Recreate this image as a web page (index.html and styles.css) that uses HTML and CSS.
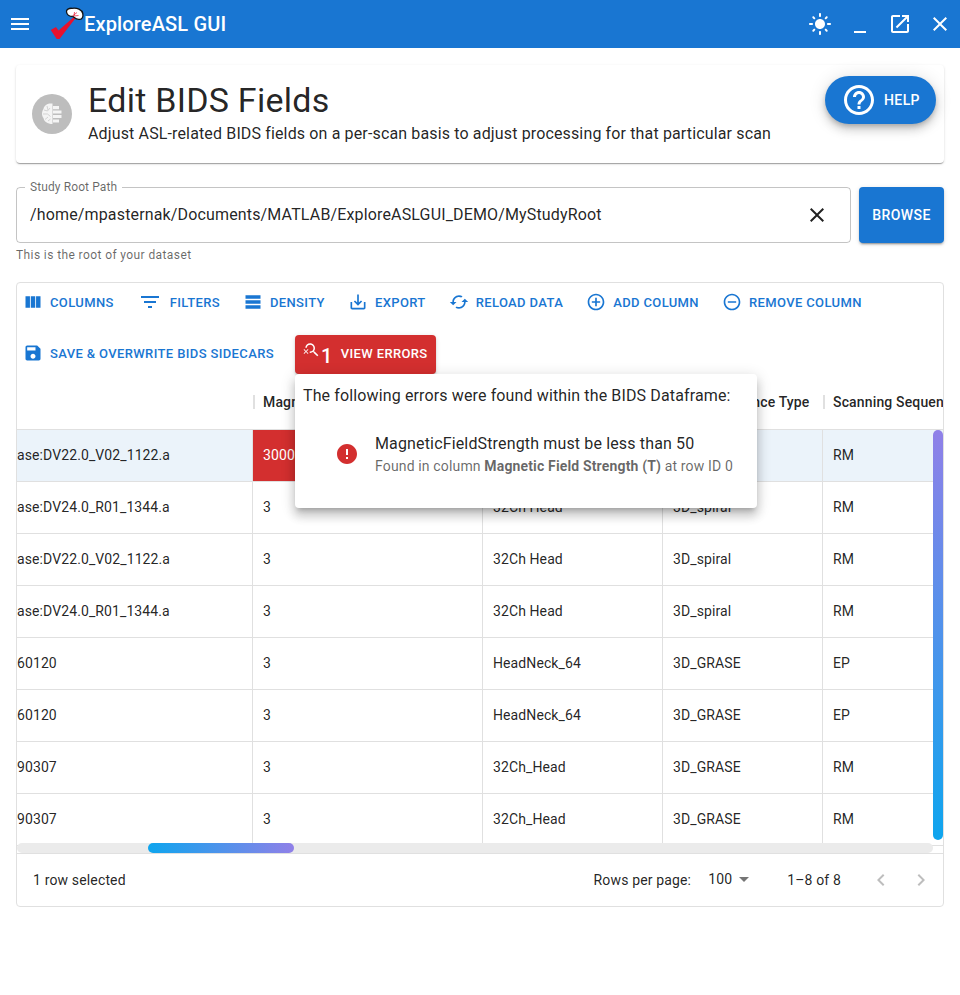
FILE: index.html
```html
<!DOCTYPE html>
<html>
<head>
    <meta charset="UTF-8">
    <meta name="viewport" content="width=device-width, initial-scale=1.0">
    <title>ExploreASL GUI</title>
    <link rel="stylesheet" href="styles.css">
</head>
<body>

<header class="appbar">
    <button class="icon-btn"><svg class="icon-24" viewBox="0 0 24 24"><path d="M3 18h18v-2H3v2zm0-5h18v-2H3v2zm0-7v2h18V6H3z"/></svg></button>
    <svg class="logo" viewBox="0 0 36 36">
        <path d="M.7 24 L6 21 L8.500 24.500 L25 10 L26 11.500 L9.500 33 L6.700 33z" fill="#e8112d"/>
        <path d="M16.500 6 C16 3.500 19 2 22 2.300 C27 1.500 32 3.500 32.800 7.500 C33.500 11 32 13.500 29.500 13.300 C27 14 25 12 23 10.500 C20 10.500 17 9 16.500 6z" fill="#fff" stroke="#111" stroke-width="1.300"/>
        <path d="M22.500 10 L27 6.500 M24 10 L28.500 9.500 M24 10 L24.500 6" stroke="#e8112d" stroke-width="0.700"/>
    </svg>
    <span class="app-title">ExploreASL GUI</span>
    <div class="appbar-right">
        <button class="icon-btn"><svg class="icon-24" viewBox="0 0 24 24"><path d="M12 7c-2.760 0-5 2.240-5 5s2.240 5 5 5 5-2.240 5-5-2.240-5-5-5zM2 13h2c.55 0 1-.45 1-1s-.45-1-1-1H2c-.55 0-1 .45-1 1s.45 1 1 1zm18 0h2c.55 0 1-.45 1-1s-.45-1-1-1h-2c-.55 0-1 .45-1 1s.45 1 1 1zM11 2v2c0 .55.45 1 1 1s1-.45 1-1V2c0-.55-.45-1-1-1s-1 .45-1 1zm0 18v2c0 .55.45 1 1 1s1-.45 1-1v-2c0-.55-.45-1-1-1s-1 .45-1 1zM5.990 4.580c-.39-.39-1.030-.39-1.410 0-.39.39-.39 1.030 0 1.410l1.060 1.060c.39.39 1.030.39 1.410 0s.39-1.030 0-1.410L5.990 4.580zm12.370 12.370c-.39-.39-1.030-.39-1.410 0-.39.39-.39 1.030 0 1.410l1.060 1.060c.39.39 1.030.39 1.410 0 .39-.39.39-1.030 0-1.410l-1.060-1.060zm1.060-10.960c.39-.39.39-1.030 0-1.410-.39-.39-1.030-.39-1.410 0l-1.060 1.060c-.39.39-.39 1.030 0 1.410s1.030.39 1.410 0l1.060-1.060zM7.050 18.360c.39-.39.39-1.030 0-1.410-.39-.39-1.030-.39-1.410 0l-1.060 1.060c-.39.39-.39 1.030 0 1.410s1.030.39 1.410 0l1.060-1.060z"/></svg></button>
        <button class="icon-btn"><svg class="icon-24" viewBox="0 0 24 24"><path d="M6 19h12v2H6z"/></svg></button>
        <button class="icon-btn"><svg class="icon-24" viewBox="0 0 24 24"><path d="M19 19H5V5h7V3H5c-1.110 0-2 .9-2 2v14c0 1.100.89 2 2 2h14c1.100 0 2-.9 2-2v-7h-2v7zM14 3v2h3.590l-9.830 9.830 1.410 1.410L19 6.410V10h2V3h-7z"/></svg></button>
        <button class="icon-btn"><svg class="icon-24" viewBox="0 0 24 24"><path d="M19 6.410 17.590 5 12 10.590 6.410 5 5 6.410 10.590 12 5 17.590 6.410 19 12 13.410 17.590 19 19 17.590 13.410 12z"/></svg></button>
    </div>
</header>

<main class="page">
    <section class="title-card">
        <div class="avatar">
            <svg viewBox="0 0 24 24" class="avatar-icon" fill="none">
                <path d="M12.500 1.500C8 1 4 3 3.500 7 1.500 9.500 1.500 14 3.500 16c.5 3.500 4 6 9 6z" fill="#f4f4f4"/>
                <path d="M4 8l3.500 1 2.500-3M3 12h4.500l3 2.500M5 17.500l3-2.500M7 4l1 4M8 19l2.500-2" stroke="#c4c4c4" stroke-width=".7"/>
                <path d="M13 4h6v3.200h-6zM13 8.600h8.500v3h-8.500zM13 13h8.500v3h-8.500zM13 17.400h6v3.200h-6z" fill="#f4f4f4"/>
            </svg>
        </div>
        <div class="title-text">
            <h1>Edit BIDS Fields</h1>
            <p>Adjust ASL-related BIDS fields on a per-scan basis to adjust processing for that particular scan</p>
        </div>
        <button class="help-btn">
            <svg class="help-icon" viewBox="0 0 24 24"><path d="M11 18h2v-2h-2v2zm1-16C6.480 2 2 6.480 2 12s4.480 10 10 10 10-4.480 10-10S17.520 2 12 2zm0 18c-4.410 0-8-3.590-8-8s3.590-8 8-8 8 3.590 8 8-3.590 8-8 8zm0-14c-2.210 0-4 1.790-4 4h2c0-1.100.9-2 2-2s2 .9 2 2c0 2-3 1.750-3 5h2c0-2.250 3-2.500 3-5 0-2.210-1.790-4-4-4z"/></svg>
            HELP
        </button>
    </section>

    <section class="path-row">
        <div class="path-field">
            <span class="path-label">Study Root Path</span>
            <span class="path-value">/home/mpasternak/Documents/MATLAB/ExploreASLGUI_DEMO/MyStudyRoot</span>
            <svg class="path-clear" viewBox="0 0 24 24"><path d="M19 6.410 17.590 5 12 10.590 6.410 5 5 6.410 10.590 12 5 17.590 6.410 19 12 13.410 17.590 19 19 17.590 13.410 12z"/></svg>
        </div>
        <button class="browse-btn">BROWSE</button>
    </section>
    <p class="helper">This is the root of your dataset</p>

    <section class="grid-panel">
        <div class="toolbar">
            <button class="tool-btn"><svg viewBox="0 0 24 24"><path d="M14.670 5v14H9.330V5h5.340zm1 14H21V5h-5.330v14zm-7.340 0V5H3v14h5.330z"/></svg>COLUMNS</button>
            <button class="tool-btn filters"><svg viewBox="0 0 24 24"><path d="M10 18h4v-2h-4v2zM3 6v2h18V6H3zm3 7h12v-2H6v2z"/></svg>FILTERS</button>
            <button class="tool-btn"><svg viewBox="0 0 24 24"><path d="M21 8H3V4h18v4zm0 2H3v4h18v-4zm0 6H3v4h18v-4z"/></svg>DENSITY</button>
            <button class="tool-btn"><svg viewBox="0 0 24 24"><path d="M19 12v7H5v-7H3v7c0 1.100.9 2 2 2h14c1.100 0 2-.9 2-2v-7h-2zm-6 .67l2.590-2.580L17 11.500l-5 5-5-5 1.410-1.410L11 12.670V3h2z"/></svg>EXPORT</button>
            <button class="tool-btn"><svg viewBox="0 0 24 24"><path d="M19 8l-4 4h3c0 3.310-2.690 6-6 6-1.010 0-1.970-.25-2.800-.7l-1.460 1.460C8.970 19.540 10.430 20 12 20c4.420 0 8-3.580 8-8h3l-4-4zM6 12c0-3.310 2.690-6 6-6 1.010 0 1.970.25 2.800.7l1.460-1.460C15.030 4.460 13.570 4 12 4c-4.420 0-8 3.580-8 8H1l4 4 4-4H6z"/></svg>RELOAD DATA</button>
            <button class="tool-btn"><svg viewBox="0 0 24 24"><path d="M13 7h-2v4H7v2h4v4h2v-4h4v-2h-4V7zm-1-5C6.480 2 2 6.480 2 12s4.480 10 10 10 10-4.480 10-10S17.520 2 12 2zm0 18c-4.410 0-8-3.590-8-8s3.590-8 8-8 8 3.590 8 8-3.590 8-8 8z"/></svg>ADD COLUMN</button>
            <button class="tool-btn"><svg viewBox="0 0 24 24"><path d="M7 11v2h10v-2H7zm5-9C6.480 2 2 6.480 2 12s4.480 10 10 10 10-4.480 10-10S17.520 2 12 2zm0 18c-4.410 0-8-3.590-8-8s3.590-8 8-8 8 3.590 8 8-3.590 8-8 8z"/></svg>REMOVE COLUMN</button>
            <button class="tool-btn save"><svg viewBox="0 0 24 24"><path d="M17 3H5c-1.110 0-2 .9-2 2v14c0 1.100.89 2 2 2h14c1.100 0 2-.9 2-2V7l-4-4zm-5 16c-1.660 0-3-1.340-3-3s1.340-3 3-3 3 1.340 3 3-1.340 3-3 3zm3-10H5V5h10v4z"/></svg>SAVE &amp; OVERWRITE BIDS SIDECARS</button>
            <button class="errors-btn">
                <svg viewBox="0 0 24 24"><path d="M15.500 14h-.79l-.28-.27C15.410 12.590 16 11.110 16 9.500 16 5.910 13.090 3 9.500 3 6.080 3 3.280 5.640 3.030 9h2.020C5.300 6.750 7.180 5 9.500 5 11.990 5 14 7.010 14 9.500S11.990 14 9.500 14c-.17 0-.33-.03-.5-.05v2.020c.17.02.33.03.5.03 1.610 0 3.090-.59 4.230-1.570l.27.28v.79l5 4.990L20.490 19l-4.990-5z"/><path d="M6.470 10.820 4 13.290l-2.470-2.470-.71.71L3.290 14l-2.470 2.470.71.71L4 14.710l2.470 2.470.71-.71L4.710 14l2.470-2.470z"/></svg>
                <span class="errors-count">1</span>
                <span class="errors-label">VIEW ERRORS</span>
            </button>
        </div>

        <div class="grid-head">
            <div class="head-cell"></div>
            <div class="head-cell"><span class="sep"></span>Magnetic Field Strength (T)</div>
            <div class="head-cell">Receive Coil</div>
            <div class="head-cell">Pulse Sequence Type</div>
            <div class="head-cell last"><span class="sep"></span>Scanning Sequence</div>
        </div>

        <div class="grid-body">
            <div class="row selected">
                <div class="cell first">ase:DV22.0_V02_1122.a</div>
                <div class="cell error">3000</div>
                <div class="cell">32Ch Head</div>
                <div class="cell">3D_spiral</div>
                <div class="cell">RM</div>
            </div>
            <div class="row">
                <div class="cell first">ase:DV24.0_R01_1344.a</div>
                <div class="cell">3</div>
                <div class="cell">32Ch Head</div>
                <div class="cell">3D_spiral</div>
                <div class="cell">RM</div>
            </div>
            <div class="row">
                <div class="cell first">ase:DV22.0_V02_1122.a</div>
                <div class="cell">3</div>
                <div class="cell">32Ch Head</div>
                <div class="cell">3D_spiral</div>
                <div class="cell">RM</div>
            </div>
            <div class="row">
                <div class="cell first">ase:DV24.0_R01_1344.a</div>
                <div class="cell">3</div>
                <div class="cell">32Ch Head</div>
                <div class="cell">3D_spiral</div>
                <div class="cell">RM</div>
            </div>
            <div class="row">
                <div class="cell first">60120</div>
                <div class="cell">3</div>
                <div class="cell">HeadNeck_64</div>
                <div class="cell">3D_GRASE</div>
                <div class="cell">EP</div>
            </div>
            <div class="row">
                <div class="cell first">60120</div>
                <div class="cell">3</div>
                <div class="cell">HeadNeck_64</div>
                <div class="cell">3D_GRASE</div>
                <div class="cell">EP</div>
            </div>
            <div class="row">
                <div class="cell first">90307</div>
                <div class="cell">3</div>
                <div class="cell">32Ch_Head</div>
                <div class="cell">3D_GRASE</div>
                <div class="cell">RM</div>
            </div>
            <div class="row">
                <div class="cell first">90307</div>
                <div class="cell">3</div>
                <div class="cell">32Ch_Head</div>
                <div class="cell">3D_GRASE</div>
                <div class="cell">RM</div>
            </div>
            <div class="vscroll-thumb"></div>
            <div class="hscroll-track"><div class="hscroll-thumb"></div></div>
        </div>

        <div class="grid-foot">
            <span>1 row selected</span>
            <div class="pager">
                <span>Rows per page:</span>
                <span class="page-size">100<svg viewBox="0 0 24 24"><path d="M7 10l5 5 5-5z"/></svg></span>
                <span class="page-range">1–8 of 8</span>
                <svg class="chev" viewBox="0 0 24 24"><path d="M15.410 7.410 14 6l-6 6 6 6 1.410-1.410L10.830 12z"/></svg>
                <svg class="chev" viewBox="0 0 24 24"><path d="M10 6 8.590 7.410 13.170 12l-4.580 4.590L10 18l6-6z"/></svg>
            </div>
        </div>

        <div class="errors-popover">
            <p class="errors-head">The following errors were found within the BIDS Dataframe:</p>
            <div class="error-item">
                <svg viewBox="0 0 24 24"><path d="M12 2C6.480 2 2 6.480 2 12s4.480 10 10 10 10-4.480 10-10S17.520 2 12 2zm1 15h-2v-2h2v2zm0-4h-2V7h2v6z"/></svg>
                <div>
                    <div class="error-primary">MagneticFieldStrength must be less than 50</div>
                    <div class="error-secondary">Found in column <b>Magnetic Field Strength (T)</b> at row ID 0</div>
                </div>
            </div>
        </div>
    </section>
</main>

</body>
</html>
```

FILE: styles.css
```css
* {
    box-sizing: border-box;
}
body {
    font-family: Roboto, "Liberation Sans", sans-serif;
    margin: 0;
    background: #fff;
    color: rgba(0, 0, 0, 0.87);
}
button {
    font-family: inherit;
    border: none;
    background: none;
    padding: 0;
}

/* app bar */
.appbar {
    height: 48px;
    background: #1976d2;
    color: #fff;
    display: flex;
    align-items: center;
}
.icon-btn {
    width: 40px;
    height: 48px;
    display: flex;
    align-items: center;
    justify-content: center;
}
.icon-24 {
    width: 24px;
    height: 24px;
    fill: #fff;
}
.logo {
    width: 36px;
    height: 36px;
    margin-left: 10px;
    flex: none;
}
.app-title {
    font-size: 20px;
    font-weight: 500;
    letter-spacing: 0.15px;
    margin-left: -2px;
}
.appbar-right {
    margin-left: auto;
    display: flex;
}

.page {
    padding: 17px 16px 0;
}

/* title card */
.title-card {
    position: relative;
    height: 98px;
    display: flex;
    align-items: center;
    padding-left: 16px;
    border-radius: 4px;
    box-shadow: 0 2px 1px -1px rgba(0, 0, 0, 0.2), 0 1px 1px 0 rgba(0, 0, 0, 0.14), 0 1px 3px 0 rgba(0, 0, 0, 0.12);
}
.avatar {
    width: 40px;
    height: 40px;
    border-radius: 50%;
    background: #bdbdbd;
    display: flex;
    align-items: center;
    justify-content: center;
    flex: none;
}
.avatar-icon {
    width: 24px;
    height: 24px;
}
.title-text {
    margin-left: 16px;
    padding-bottom: 3px;
}
h1 {
    font-size: 34px;
    font-weight: 400;
    line-height: 42px;
    letter-spacing: 0.25px;
    margin: 0;
}
.title-text p {
    margin: 1px 0 0;
    font-size: 16px;
    line-height: 24px;
    letter-spacing: 0.14px;
}
.help-btn {
    position: absolute;
    top: 11px;
    right: 8px;
    width: 111px;
    height: 48px;
    border-radius: 24px;
    background: #1976d2;
    color: #fff;
    font-size: 14px;
    font-weight: 500;
    letter-spacing: 0.4px;
    display: flex;
    align-items: center;
    padding-left: 16px;
    gap: 7px;
    box-shadow: 0 3px 5px -1px rgba(0, 0, 0, 0.2), 0 6px 10px 0 rgba(0, 0, 0, 0.14), 0 1px 18px 0 rgba(0, 0, 0, 0.12);
}
.help-icon {
    width: 36px;
    height: 36px;
    fill: #fff;
}

/* study path */
.path-row {
    display: flex;
    gap: 8px;
    margin-top: 24px;
}
.path-field {
    position: relative;
    flex: 1;
    height: 56px;
    border: 1px solid rgba(0, 0, 0, 0.23);
    border-radius: 4px;
    display: flex;
    align-items: center;
    padding-left: 13px;
    font-size: 16px;
    letter-spacing: 0.15px;
}
.path-value {
    padding-bottom: 2px;
}
.path-label {
    position: absolute;
    top: -8px;
    left: 8px;
    padding: 0 5px;
    background: #fff;
    font-size: 12px;
    line-height: 14px;
    color: rgba(0, 0, 0, 0.6);
    letter-spacing: 0.1px;
}
.path-clear {
    width: 24px;
    height: 24px;
    margin-left: auto;
    margin-right: 21px;
    fill: rgba(0, 0, 0, 0.87);
}
.browse-btn {
    width: 85px;
    height: 56px;
    border-radius: 4px;
    background: #1976d2;
    color: #fff;
    font-size: 14px;
    font-weight: 500;
    letter-spacing: 0.4px;
    box-shadow: 0 3px 1px -2px rgba(0, 0, 0, 0.2), 0 2px 2px 0 rgba(0, 0, 0, 0.14), 0 1px 5px 0 rgba(0, 0, 0, 0.12);
}
.helper {
    margin: 2px 0 0;
    font-size: 12px;
    line-height: 20px;
    letter-spacing: 0.4px;
    color: rgba(0, 0, 0, 0.6);
}

/* data grid */
.grid-panel {
    position: relative;
    margin-top: 17px;
    height: 625px;
    border: 1px solid #e0e0e0;
    border-radius: 4px;
}
.toolbar {
    display: flex;
    flex-wrap: wrap;
    align-items: flex-start;
    align-content: flex-start;
    gap: 14px 12px;
    height: 95px;
}
.tool-btn {
    height: 38px;
    display: flex;
    align-items: center;
    padding: 0 5px 0 6px;
    color: #1976d2;
    font-size: 13px;
    font-weight: 500;
    letter-spacing: 0.37px;
    white-space: nowrap;
}
.tool-btn svg {
    width: 20px;
    height: 20px;
    margin-right: 7px;
    fill: #1976d2;
    flex: none;
}
.tool-btn.filters {
    margin-left: 2px;
    padding-left: 5px;
}
.tool-btn.filters svg {
    width: 24px;
    height: 24px;
    margin-right: 8px;
}
.tool-btn.save {
    height: 36px;
}
.errors-btn {
    height: 39px;
    margin-left: 4px;
    width: 141px;
    border-radius: 4px;
    background: #d32f2f;
    color: #fff;
    font-size: 13px;
    font-weight: 500;
    letter-spacing: 0.37px;
    display: flex;
    align-items: center;
    padding-left: 8px;
    box-shadow: 0 3px 1px -2px rgba(0, 0, 0, 0.2), 0 2px 2px 0 rgba(0, 0, 0, 0.14), 0 1px 5px 0 rgba(0, 0, 0, 0.12);
}
.errors-btn svg {
    width: 18px;
    height: 18px;
    fill: #fff;
    margin-top: -10px;
    flex: none;
}
.errors-count {
    font-size: 20px;
    font-weight: 500;
    line-height: 20px;
    margin: 0 8px 0 0;
    padding-top: 2px;
}
.errors-label {
    padding-bottom: 3px;
}
.grid-head,
.row {
    display: grid;
    grid-template-columns: 236px 230px 180px 160px 1fr;
}
.grid-head {
    height: 52px;
    padding-bottom: 1px;
    border-bottom: 1px solid #e0e0e0;
    font-size: 14px;
    font-weight: 500;
    letter-spacing: 0.15px;
}
.head-cell {
    position: relative;
    display: flex;
    align-items: center;
    padding: 0 10px 3px;
    white-space: nowrap;
    min-width: 0;
    overflow: hidden;
}
.head-cell.last {
    padding-right: 0;
}
.sep {
    position: absolute;
    left: 0;
    top: 17px;
    width: 2px;
    height: 14px;
    background: #e0e0e0;
}
.grid-body {
    position: relative;
    height: 424px;
    overflow: hidden;
    border-bottom: 1px solid #e0e0e0;
}
.row {
    height: 52px;
    border-bottom: 1px solid #e0e0e0;
    font-size: 14px;
    letter-spacing: 0.1px;
}
.row.selected {
    background: #ebf3fa;
}
.cell {
    display: flex;
    align-items: center;
    padding: 0 10px 2px;
    border-right: 1px solid #e0e0e0;
    white-space: nowrap;
}
.cell:last-child {
    border-right: none;
}
.cell.first {
    padding: 0 0 2px;
}
.cell.error {
    background: #d32f2f;
    color: #fff;
}
.vscroll-thumb {
    position: absolute;
    top: 0;
    right: 0;
    width: 10px;
    height: 410px;
    border-radius: 6px;
    background: linear-gradient(180deg, #9080e8, #0ea5ee);
}
.hscroll-track {
    position: absolute;
    left: 0;
    bottom: 0;
    width: 916px;
    height: 10px;
    border-radius: 5px;
    background: #ebebeb;
}
.hscroll-thumb {
    margin-left: 131px;
    width: 146px;
    height: 10px;
    border-radius: 5px;
    background: linear-gradient(90deg, #0ea5ee, #9080e8);
}
.grid-foot {
    height: 52px;
    display: flex;
    align-items: center;
    justify-content: space-between;
    padding-left: 16px;
    font-size: 14px;
    letter-spacing: 0.15px;
}
.pager {
    display: flex;
    align-items: center;
}
.page-size {
    display: flex;
    align-items: center;
    margin-left: 17px;
    margin-top: -2px;
}
.page-size svg {
    width: 24px;
    height: 24px;
    fill: rgba(0, 0, 0, 0.54);
}
.page-range {
    margin: 0 28px 0 31px;
}
.chev {
    width: 24px;
    height: 24px;
    fill: rgba(0, 0, 0, 0.26);
    margin-right: 16px;
}
.chev:last-child {
    margin-right: 10px;
}

/* errors popover, sits on top of the grid */
.errors-popover {
    position: absolute;
    top: 91px;
    left: 278px;
    width: 462px;
    height: 134px;
    background: #fff;
    border-radius: 4px;
    padding: 11px 8px;
    box-shadow: 0 5px 5px -3px rgba(0, 0, 0, 0.2), 0 8px 10px 1px rgba(0, 0, 0, 0.14), 0 3px 14px 2px rgba(0, 0, 0, 0.12);
}
.errors-head {
    margin: 0;
    font-size: 16px;
    line-height: 22px;
    letter-spacing: 0.13px;
}
.error-item {
    display: flex;
    align-items: center;
    margin-top: 25px;
    padding-left: 32px;
}
.error-item svg {
    width: 24px;
    height: 24px;
    fill: #d32f2f;
    margin-right: 16px;
    flex: none;
}
.error-primary {
    font-size: 16px;
    line-height: 24px;
    letter-spacing: 0.15px;
}
.error-secondary {
    font-size: 14px;
    line-height: 20px;
    letter-spacing: 0.15px;
    color: rgba(0, 0, 0, 0.6);
}
.error-secondary b {
    font-weight: 700;
}
```
